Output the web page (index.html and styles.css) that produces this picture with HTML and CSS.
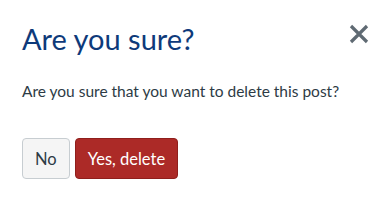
FILE: index.html
```html
<!DOCTYPE html>
<html>
<head>
<meta charset="utf-8">
<link rel="stylesheet" href="styles.css">
</head>
<body>
<div class="modal">
  <div class="modal-header">
    <h2 class="modal-title">Are you sure?</h2>
    <button class="close" aria-label="Close">
      <svg width="20" height="20" viewBox="0 0 20 20"><path d="M2 2 L18 18 M18 2 L2 18" stroke="#5f6a73" stroke-width="3.2" stroke-linecap="butt" fill="none"/></svg>
    </button>
  </div>
  <p class="modal-body">Are you sure that you want to delete this post?</p>
  <div class="modal-actions">
    <button class="btn btn-default">No</button>
    <button class="btn btn-danger">Yes, delete</button>
  </div>
</div>
</body>
</html>
```
FILE: styles.css
```css
html, body { margin: 0; padding: 0; background: #fff; }
body { font-family: Lato, "Open Sans", sans-serif; color: #2d3b45; }
.modal { padding: 21px 22px 0 22px; width: 392px; box-sizing: border-box; }
.modal-header { display: flex; justify-content: space-between; align-items: flex-start; }
.modal-title { margin: 0; font-weight: 400; font-size: 29px; line-height: 36px; color: #0e3a7a; }
.close { border: 0; background: none; padding: 0; margin: 3px 1px 0 0; width: 20px; height: 20px; cursor: pointer; }
.close svg { display: block; }
.modal-body { margin: 24px 0 0 0; font-size: 15.5px; line-height: 20px; color: #2d3b45; }
.modal-actions { display: flex; gap: 5px; margin-top: 37px; }
.btn { font-family: Lato, sans-serif; font-size: 16.5px; height: 41px; padding: 0 12px; border-radius: 4px; border: 1px solid; }
.btn-default { background: #f5f5f5; border-color: #c7cdd1; color: #2d3b45; }
.btn-danger { background: #ac2a27; border-color: #8f1f1c; color: #fff; }
```
